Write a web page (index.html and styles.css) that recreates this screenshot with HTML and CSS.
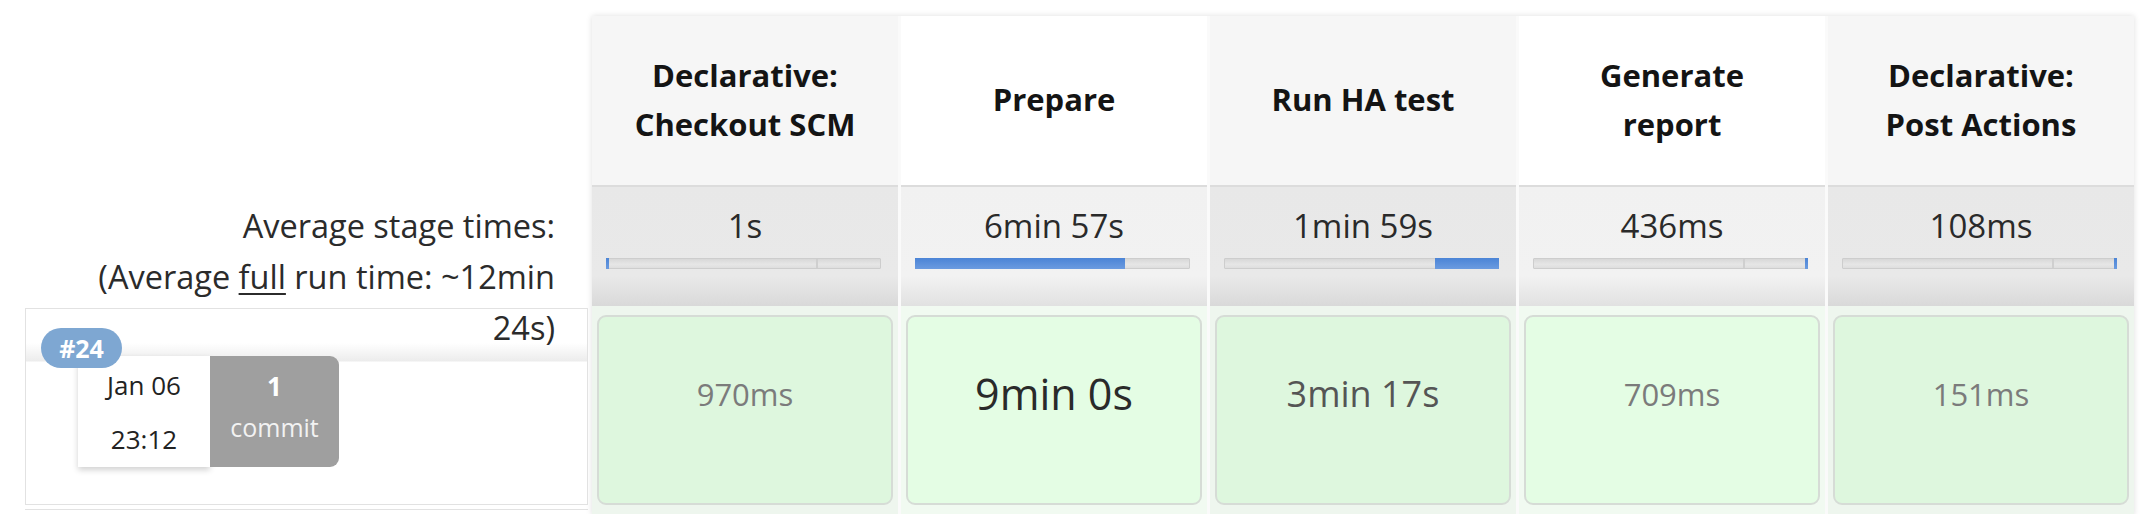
FILE: index.html
```html
<!DOCTYPE html>
<html lang="en">
<head>
<meta charset="utf-8">
<title>Stage View</title>
<link rel="stylesheet" href="styles.css">
</head>
<body>
<div class="stage-view">
  <div class="left">
    <div class="left-head"></div>
    <div class="avg-label">Average stage times:<br>(Average <u>full</u> run time: ~12min 24s)</div>
    <div class="run-row">
      <span class="badge">#24</span>
      <div class="run-card">
        <div class="run-date"><span>Jan 06</span><span>23:12</span></div>
        <div class="run-commit"><span class="num">1</span><span>commit</span></div>
      </div>
    </div>
    <div class="next-row"></div>
  </div>
  <div class="stages">
    <div class="head odd"><span>Declarative:<br>Checkout SCM</span></div>
    <div class="head even"><span>Prepare</span></div>
    <div class="head odd"><span>Run HA test</span></div>
    <div class="head even"><span>Generate<br>report</span></div>
    <div class="head odd"><span>Declarative:<br>Post Actions</span></div>

    <div class="avg odd"><div class="avg-time">1s</div><div class="bar"><i class="tick"></i><b class="fill start"></b></div></div>
    <div class="avg even"><div class="avg-time">6min 57s</div><div class="bar"><b class="fill prep"></b></div></div>
    <div class="avg odd"><div class="avg-time">1min 59s</div><div class="bar"><b class="fill test"></b></div></div>
    <div class="avg even"><div class="avg-time">436ms</div><div class="bar"><i class="tick"></i><b class="fill end"></b></div></div>
    <div class="avg odd"><div class="avg-time">108ms</div><div class="bar"><i class="tick"></i><b class="fill end"></b></div></div>

    <div class="run odd"><div class="cell small">970ms</div></div>
    <div class="run even"><div class="cell big">9min 0s</div></div>
    <div class="run odd"><div class="cell mid">3min 17s</div></div>
    <div class="run even"><div class="cell small">709ms</div></div>
    <div class="run odd"><div class="cell small">151ms</div></div>
  </div>
</div>
</body>
</html>
```

FILE: styles.css
```css
html, body {
  margin: 0;
  padding: 0;
  overflow: hidden;
  background: #fff;
}
body {
  font-family: "Open Sans", "Noto Sans", sans-serif;
  color: #333;
}
.stage-view {
  display: flex;
  align-items: flex-start;
  width: 2144px;
  height: 514px;
}
.left {
  width: 589px;
  flex: none;
  margin-right: 3px;
}
.left-head {
  height: 185px;
}
.avg-label {
  height: 121px;
  box-sizing: border-box;
  padding: 15px 34px 0 90px;
  font-size: 32.5px;
  line-height: 51px;
  text-align: right;
  color: #2b2b2b;
  position: relative;
  z-index: 2;
}
.avg-label u {
  text-decoration-thickness: 2px;
  text-underline-offset: 4px;
}
.run-row {
  position: relative;
  margin: 2px 1px 0 25px;
  height: 197px;
  box-sizing: border-box;
  border: 1px solid #e2e2e2;
  background: linear-gradient(to bottom, #fff 0, #fff 34px, #ececec 52px, #fff 53px, #fff 100%);
  padding: 47px 0 0 52px;
}
.badge {
  position: absolute;
  left: 15px;
  top: 19px;
  z-index: 3;
  width: 81px;
  height: 40px;
  border-radius: 20px;
  background: #7ea7d2;
  color: #fff;
  font-weight: 700;
  font-size: 25px;
  line-height: 40px;
  text-align: center;
}
.run-card {
  display: flex;
  width: 261px;
  height: 111px;
}
.run-date {
  width: 132px;
  background: #fff;
  box-shadow: 0 3px 6px rgba(0, 0, 0, 0.18);
  display: flex;
  flex-direction: column;
  align-items: center;
  justify-content: center;
  gap: 6px;
  font-size: 26px;
  line-height: 48px;
  color: #222;
}
.run-commit {
  width: 129px;
  box-sizing: border-box;
  padding-bottom: 10px;
  background: #9f9f9f;
  border-radius: 0 9px 9px 0;
  display: flex;
  flex-direction: column;
  align-items: center;
  justify-content: center;
  color: #f2f2f2;
  font-size: 25px;
  line-height: 41px;
}
.run-commit .num {
  font-weight: 700;
  color: #fff;
  font-size: 26px;
}
.next-row {
  margin: 4px 1px 0 25px;
  height: 10px;
  border-top: 1px solid #e2e2e2;
}

.stages {
  flex: none;
  margin-top: 16px;
  display: grid;
  grid-template-columns: repeat(5, 306px);
  grid-template-rows: 169px 121px 210px;
  column-gap: 3px;
  background: #fafafa;
  box-shadow: 0 0 6px rgba(0, 0, 0, 0.13);
}
.head {
  display: flex;
  align-items: center;
  justify-content: center;
  text-align: center;
  font-weight: 700;
  font-size: 31px;
  line-height: 49px;
  color: #141414;
  padding-bottom: 2px;
  box-sizing: border-box;
}
.head.odd { background: #f6f6f6; }
.head.even { background: #fff; }

.avg {
  border-top: 2px solid #dcdcdc;
  box-sizing: border-box;
  padding-top: 14px;
  text-align: center;
}
.avg.odd { background: linear-gradient(to bottom, #e8e8e8 0, #e9e9e9 75%, #d9d9d9 100%); }
.avg.even { background: linear-gradient(to bottom, #f1f1f1 0, #f2f2f2 75%, #e1e1e1 100%); }
.avg-time {
  font-size: 33px;
  line-height: 49px;
  color: #2a2a2a;
}
.bar {
  position: relative;
  margin: 8px 17px 0 14px;
  height: 11px;
  box-sizing: border-box;
  border: 1px solid #cdcdcd;
  border-radius: 1px;
  background: linear-gradient(to bottom, #d8d8d8, #e6e6e6 60%, #dedede);
}
.tick {
  position: absolute;
  left: 76.5%;
  top: 0;
  bottom: 0;
  width: 2px;
  background: #cfcfcf;
}
.fill {
  position: absolute;
  top: -1px;
  bottom: -1px;
  background: linear-gradient(to bottom, #4b84d6, #6b9be0);
}
.fill.start { left: -1px; width: 3px; }
.fill.prep { left: -1px; width: 77%; }
.fill.test { left: 77%; right: -1px; }
.fill.end { right: -1px; width: 3px; }

.run {
  padding: 9px 5px 7px 5px;
  box-sizing: border-box;
  display: flex;
}
.run.odd { background: #eef6ee; }
.run.even { background: #f1faf1; }
.run.odd .cell { background: #def7de; }
.run.even .cell { background: #e4fde4; }
.cell {
  flex: 1;
  height: 190px;
  box-sizing: border-box;
  border: 2px solid #d6dcd6;
  border-radius: 9px;
  text-align: center;
  padding-top: 53px;
  line-height: 48px;
}
.cell.small { font-size: 31px; color: #7b7b7b; }
.cell.mid { font-size: 36px; color: #555; }
.cell.big { font-size: 43px; color: #2a2a2a; }
```
